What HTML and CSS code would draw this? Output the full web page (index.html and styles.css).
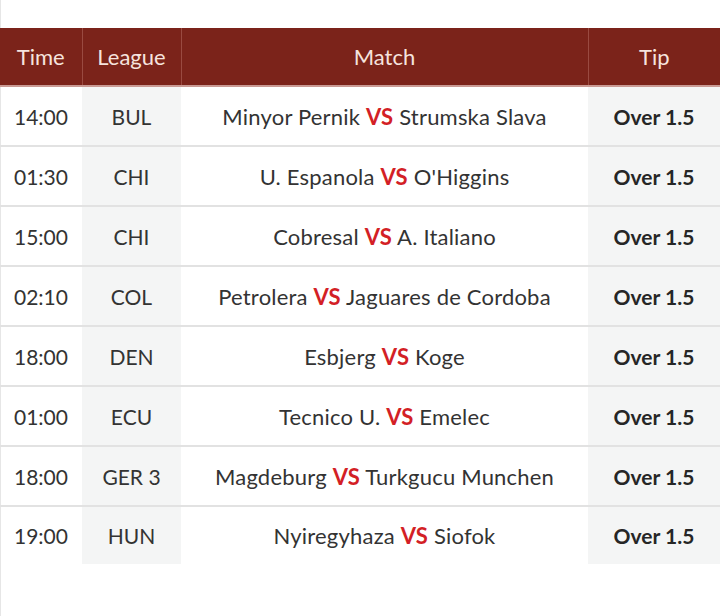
FILE: index.html
```html
<!DOCTYPE html>
<html>
<head>
<meta charset="utf-8">
<link rel="stylesheet" href="styles.css">
</head>
<body>
<div class="wrap">
<table class="tips">
  <colgroup>
    <col class="c-time"><col class="c-league"><col class="c-match"><col class="c-tip">
  </colgroup>
  <thead>
    <tr><th>Time</th><th>League</th><th>Match</th><th>Tip</th></tr>
  </thead>
  <tbody>
    <tr><td>14:00</td><td class="shade">BUL</td><td class="match">Minyor Pernik <b class="vs">VS</b> Strumska Slava</td><td class="shade tip">Over 1.5</td></tr>
    <tr><td>01:30</td><td class="shade">CHI</td><td class="match">U. Espanola <b class="vs">VS</b> O'Higgins</td><td class="shade tip">Over 1.5</td></tr>
    <tr><td>15:00</td><td class="shade">CHI</td><td class="match">Cobresal <b class="vs">VS</b> A. Italiano</td><td class="shade tip">Over 1.5</td></tr>
    <tr><td>02:10</td><td class="shade">COL</td><td class="match">Petrolera <b class="vs">VS</b> Jaguares de Cordoba</td><td class="shade tip">Over 1.5</td></tr>
    <tr><td>18:00</td><td class="shade">DEN</td><td class="match">Esbjerg <b class="vs">VS</b> Koge</td><td class="shade tip">Over 1.5</td></tr>
    <tr><td>01:00</td><td class="shade">ECU</td><td class="match">Tecnico U. <b class="vs">VS</b> Emelec</td><td class="shade tip">Over 1.5</td></tr>
    <tr><td>18:00</td><td class="shade">GER 3</td><td class="match">Magdeburg <b class="vs">VS</b> Turkgucu Munchen</td><td class="shade tip">Over 1.5</td></tr>
    <tr><td>19:00</td><td class="shade">HUN</td><td class="match">Nyiregyhaza <b class="vs">VS</b> Siofok</td><td class="shade tip">Over 1.5</td></tr>
  </tbody>
</table>
</div>
</body>
</html>
```
FILE: styles.css
```css
html, body {
  margin: 0;
  padding: 0;
  background: #ffffff;
}
body {
  font-family: Lato, "Open Sans", sans-serif;
  color: #333333;
}
.wrap {
  padding-top: 28px;
  min-height: 588px;
  border-left: 1px solid #e6e6e6;
}
.tips {
  width: 720px;
  border-collapse: collapse;
  table-layout: fixed;
  margin-left: -1px;
}
.c-time { width: 82px; }
.c-league { width: 99px; }
.c-match { width: 407px; }
.c-tip { width: 132px; }
.tips th {
  background: #7b231a;
  color: #f6e3de;
  font-weight: 400;
  font-size: 22px;
  height: 57px;
  padding: 0;
  border-left: 1px solid #9a4a41;
  border-bottom: 2px solid #c99a94;
}
.tips th:first-child { border-left: none; }
.tips td {
  text-align: center;
  font-size: 21px;
  height: 58px;
  padding: 0;
  border-bottom: 2px solid #e2e2e2;
}
.tips td.match { font-size: 22px; letter-spacing: 0.2px; }
.tips tbody tr:last-child td { border-bottom: none; height: 57px; }
.tips td.shade { background: #f4f5f5; }
.tips td.tip { font-weight: 700; color: #262626; }
.vs { color: #d31f26; font-weight: 700; }
```
